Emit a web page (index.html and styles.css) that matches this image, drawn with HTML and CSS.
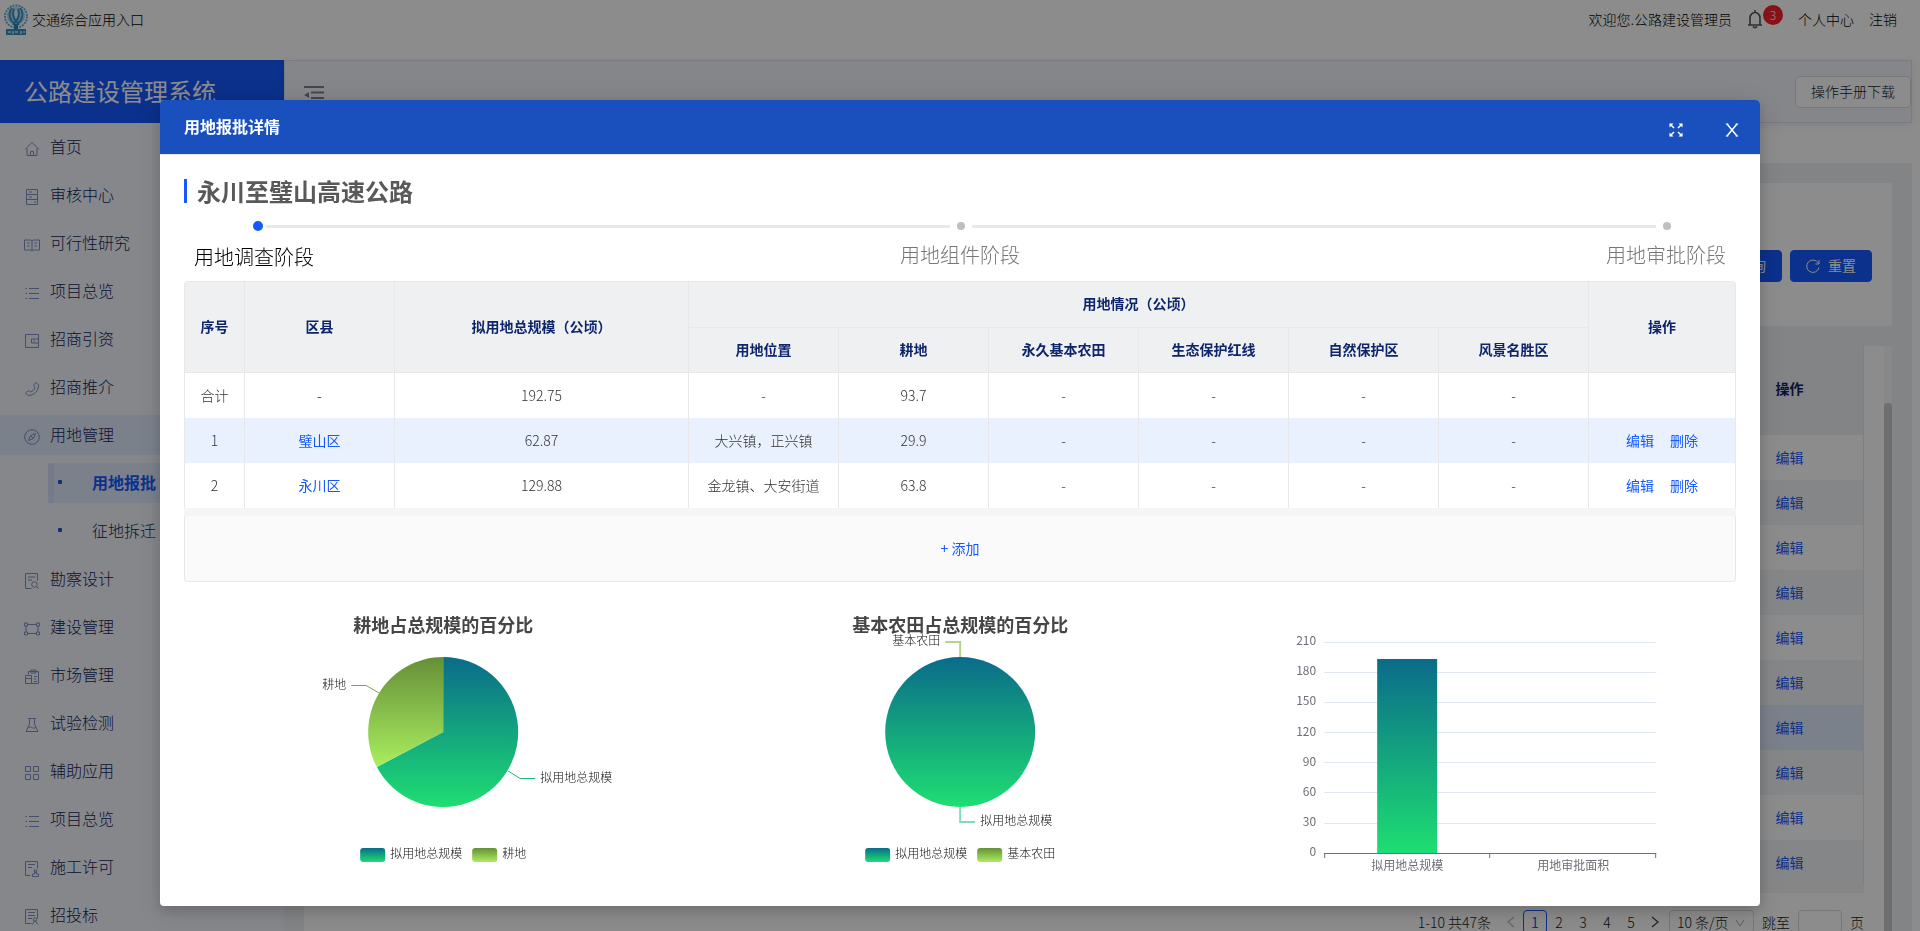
FILE: index.html
```html
<!DOCTYPE html>
<html lang="zh-CN">
<head>
<meta charset="utf-8">
<title>公路建设管理系统</title>
<link rel="stylesheet" href="styles.css">
</head>
<body>
<div class="page">
  <header class="topbar">
    <svg class="emblem" viewBox="0 0 26 32" aria-hidden="true">
      <circle cx="13" cy="12.500" r="11" fill="none" stroke="#5fb0dc" stroke-width="2" stroke-dasharray="2 1"/>
      <circle cx="13" cy="12" r="9" fill="#a8d6ec"/>
      <path d="M9 4C5 9 6 16 12 20M17 4c4 5 3 12-3 16M11 5c-3 6 1 12 5 16M15 5c3 6-1 12-5 16" fill="none" stroke="#2b8cc8" stroke-width="1.600"/>
      <path d="M13 4c-2 4-2 7 0 11 2-4 2-7 0-11" fill="#dff1fa"/>
      <path d="M11 20h4v5h-4z" fill="#2486c2"/>
      <path d="M3 25h20v6H3z" fill="#3590c6"/>
      <path d="M5 28h3M10 27v3M12 28h3M18 27v3M20 28h2" stroke="#c4e4f6" stroke-width="1.500"/>
    </svg>
    <span>交通综合应用入口</span>
    <nav class="topnav">
      <span>欢迎您.公路建设管理员</span>
      <button class="bell" type="button" aria-label="消息">
        <svg viewBox="0 0 16 20" width="16" height="20"><path d="M8 1v2M1 16h14M3 16V9a5 5.500 0 0 1 10 0v7M6 17.500c1 1.500 3 1.500 4 0" fill="none" stroke="#555" stroke-width="1.600"/></svg>
        <span class="badge">3</span>
      </button>
      <a href="#">个人中心</a>
      <a href="#">注销</a>
    </nav>
  </header>
  <div class="shell">
    <aside class="sidebar">
      <div class="brand">公路建设管理系统</div>
      <ul class="menu">
        <li><a href="#"><svg viewBox="0 0 16 16"><path d="M1 8.500 8 1.500l7 7M3 7.500v7h10v-7M6.500 14.500v-4h3v4"/></svg>首页</a></li>
        <li><a href="#"><svg viewBox="0 0 16 16"><path d="M2.500.500h11v15h-11zM2.500 5.500h11M2.500 10.500h11M5 3h3M5 8h3M10 13h2"/></svg>审核中心</a></li>
        <li><a href="#"><svg viewBox="0 0 16 16"><path d="M.500 3h6L8 4l1.500-1h6v10h-6L8 14l-1.500-1h-6zM8 4v10M3 6h2.500M3 9h2.500M10.500 6H13M10.500 9H13"/></svg>可行性研究</a></li>
        <li><a href="#"><svg viewBox="0 0 16 16"><path d="M5 3.500h10M5 8.500h10M5 13.500h10M1.500 3.500H3M1.500 8.500H3M1.500 13.500H3"/></svg>项目总览</a></li>
        <li><a href="#"><svg viewBox="0 0 16 16"><path d="M1.500 1.500h13v13h-13zM14.500 6h-7v4h7M9.500 8h1.500"/></svg>招商引资</a></li>
        <li><a href="#"><svg viewBox="0 0 16 16"><path d="M12 1.500 14.500 4C14.500 10 10 14.500 4 14.500L1.500 12l3-2.500 2 1.500C9 10 10 9 11 6.500L9.500 4.500z"/></svg>招商推介</a></li>
        <li><a href="#" class="is-open"><svg viewBox="0 0 16 16"><circle cx="8" cy="8" r="7.300"/><path d="M11.500 4.500 9.500 9.500l-5 2 2-5zM7 7l2 2"/></svg>用地管理</a>
          <ul class="submenu">
            <li><a href="#" class="is-active">用地报批</a></li>
            <li><a href="#">征地拆迁</a></li>
          </ul>
        </li>
        <li><a href="#"><svg viewBox="0 0 16 16"><path d="M7.500 15.500h-6V.500h12v7M4 4h7M4 7h4"/><circle cx="10.500" cy="11.500" r="2.800"/><path d="m12.500 13.500 2 2"/></svg>勘察设计</a></li>
        <li><a href="#"><svg viewBox="0 0 16 16"><path d="M2 5v6M14 5v6M4 3.500h8M4 12.500h8M.500 2h3v3h-3zM12.500 2h3v3h-3zM.500 11h3v3h-3zM12.500 11h3v3h-3z"/></svg>建设管理</a></li>
        <li><a href="#"><svg viewBox="0 0 16 16"><path d="M4.500 5.500v-3h10v12h-7M7 1h5v3H7zM1.500 6.500h6v8h-6zM1.500 9.500h6M10 7.500h3M10 10h2M10 12.500h3"/></svg>市场管理</a></li>
        <li><a href="#"><svg viewBox="0 0 16 16"><path d="M4 1.500h8M5.500 1.500V7L2 14.500h12L10.500 7V1.500M4 10.500c3-2 4 2 8 0"/></svg>试验检测</a></li>
        <li><a href="#"><svg viewBox="0 0 16 16"><path d="M1.500 1.500h5v5h-5zM9.500 1.500h5v5h-5zM1.500 9.500h5v5h-5zM9.500 9.500h5v5h-5z"/></svg>辅助应用</a></li>
        <li><a href="#"><svg viewBox="0 0 16 16"><path d="M5 3.500h10M5 8.500h10M5 13.500h10M1.500 3.500H3M1.500 8.500H3M1.500 13.500H3"/></svg>项目总览</a></li>
        <li><a href="#"><svg viewBox="0 0 16 16"><path d="M6.500 14.500h-5V.500h12v7M4 3.500h7M4 6.500h4M8.500 15.500h6v-2.500h-2v-2h-2v2h-2z"/><circle cx="11.500" cy="10" r="1.300"/></svg>施工许可</a></li>
        <li><a href="#"><svg viewBox="0 0 16 16"><path d="M7.500 14.500h-6V.500h12v9M4 3.500h7M4 6.500h7M4 9.500h4M8.500 15.500l2-3.500h1l2.500 3.500"/><circle cx="11" cy="10.500" r="1.700"/></svg>招投标</a></li>
      </ul>
    </aside>
    <main class="content">
      <div class="toolbar">
        <button class="fold" type="button" aria-label="收起菜单">
          <svg viewBox="0 0 20 18" width="20" height="18"><path d="M0 1h20M7 6.500h13M7 12h13M0 17h20" stroke="#7c8090" stroke-width="2"/><path d="M0 9l5-3v6z" fill="#7c8090"/></svg>
        </button>
        <button class="btn" type="button">操作手册下载</button>
      </div>
      <div class="tabs"></div>
      <div class="workspace">
        <section class="search">
          <button class="btn btn-primary" type="button">查询</button>
          <button class="btn btn-primary" type="button">
            <svg viewBox="0 0 14 14" width="14" height="14"><path d="M12.500 4.500A6.200 6.200 0 1 0 13 8.500M13 1v4H9.500" fill="none" stroke="#fff"/></svg>重置
          </button>
        </section>
        <section class="listing">
          <div class="listing-body">
            <table class="records">
              <thead><tr><th></th><th>操作</th></tr></thead>
              <tbody>
                <tr><td></td><td><a href="#">编辑</a></td></tr>
                <tr><td></td><td><a href="#">编辑</a></td></tr>
                <tr><td></td><td><a href="#">编辑</a></td></tr>
                <tr><td></td><td><a href="#">编辑</a></td></tr>
                <tr><td></td><td><a href="#">编辑</a></td></tr>
                <tr><td></td><td><a href="#">编辑</a></td></tr>
                <tr class="is-hover"><td></td><td><a href="#">编辑</a></td></tr>
                <tr><td></td><td><a href="#">编辑</a></td></tr>
                <tr><td></td><td><a href="#">编辑</a></td></tr>
                <tr><td></td><td><a href="#">编辑</a></td></tr>
              </tbody>
            </table>
            <div class="records-foot"></div>
            <nav class="pager">
              <span class="pager-total">1-10 共47条</span>
              <button type="button" aria-label="上一页"><svg viewBox="0 0 8 12" width="8" height="12"><path d="M7 1 1 6l6 5" fill="none" stroke="#bbb" stroke-width="1.300"/></svg></button>
              <button type="button" class="is-current">1</button>
              <button type="button">2</button>
              <button type="button">3</button>
              <button type="button">4</button>
              <button type="button">5</button>
              <button type="button" aria-label="下一页"><svg viewBox="0 0 8 12" width="8" height="12"><path d="m1 1 6 5-6 5" fill="none" stroke="#444" stroke-width="1.300"/></svg></button>
              <span class="pager-size">
                <select aria-label="每页条数"><option>10 条/页</option></select>
                <svg viewBox="0 0 10 8" width="10" height="8"><path d="m1 1 4 6 4-6" fill="none" stroke="#aaa"/></svg>
              </span>
              <label class="pager-jump">跳至<input type="text">页</label>
            </nav>
          </div>
          <div class="scrollbar"><div class="thumb"></div></div>
        </section>
      </div>
    </main>
  </div>
</div>

<div class="mask">
  <section class="modal" role="dialog" aria-labelledby="modal-title">
    <header class="modal-head">
      <h1 id="modal-title">用地报批详情</h1>
      <button type="button" aria-label="全屏"><svg viewBox="0 0 14 14" width="14" height="14"><path d="M1 1l4 4M13 1 9 5M1 13l4-4M13 13 9 9" stroke="#fff" stroke-width="1.500"/><path d="M.500.500h4l-4 4zM13.500.500v4l-4-4zM.500 13.500v-4l4 4zM13.500 13.500h-4l4-4z" fill="#fff"/></svg></button>
      <button type="button" aria-label="关闭"><svg viewBox="0 0 14 14" width="14" height="14"><path d="M2 1l10 12M12 1 2 13" stroke="#fff" stroke-width="1.500"/><path d="M.800 1h2.500M10.700 1h2.500M.800 13h2.500M10.700 13h2.500" stroke="#fff"/></svg></button>
    </header>
    <div class="modal-body">
      <h2 class="project">永川至璧山高速公路</h2>
      <div class="rail"><i class="dot is-on"></i><i class="line"></i><i class="dot"></i><i class="line"></i><i class="dot"></i></div>
      <ol class="stages"><li class="is-on">用地调查阶段</li><li>用地组件阶段</li><li>用地审批阶段</li></ol>
      <div class="land-wrap">
      <table class="land">
        <colgroup><col class="c-no"><col class="c-mid"><col><col class="c-mid"><col class="c-mid"><col class="c-mid"><col class="c-mid"><col class="c-mid"><col class="c-mid"><col class="c-op"></colgroup>
        <thead>
          <tr><th rowspan="2">序号</th><th rowspan="2">区县</th><th rowspan="2">拟用地总规模（公顷）</th><th colspan="6">用地情况（公顷）</th><th rowspan="2">操作</th></tr>
          <tr><th>用地位置</th><th>耕地</th><th>永久基本农田</th><th>生态保护红线</th><th>自然保护区</th><th>风景名胜区</th></tr>
        </thead>
        <tbody>
          <tr><td>合计</td><td><a href="#">-</a></td><td>192.75</td><td>-</td><td>93.7</td><td>-</td><td>-</td><td>-</td><td>-</td><td></td></tr>
          <tr class="is-hover"><td>1</td><td><a href="#">璧山区</a></td><td>62.87</td><td>大兴镇，正兴镇</td><td>29.9</td><td>-</td><td>-</td><td>-</td><td>-</td><td><div class="ops"><a href="#">编辑</a><a href="#">删除</a></div></td></tr>
          <tr><td>2</td><td><a href="#">永川区</a></td><td>129.88</td><td>金龙镇、大安街道</td><td>63.8</td><td>-</td><td>-</td><td>-</td><td>-</td><td><div class="ops"><a href="#">编辑</a><a href="#">删除</a></div></td></tr>
        </tbody>
      </table>
      </div>
      <div class="strip"></div>
      <button class="add" type="button">+ 添加</button>
      <div class="charts">
        <svg class="chart" viewBox="0 0 517 300">
          <defs>
            <linearGradient id="teal" x1="0" y1="0" x2="0" y2="1"><stop offset="0" stop-color="#0a6b8a"/><stop offset="1" stop-color="#1ede72"/></linearGradient>
            <linearGradient id="lime" x1="0" y1="0" x2="0" y2="1"><stop offset="0" stop-color="#668f38"/><stop offset="1" stop-color="#a9ee5e"/></linearGradient>
          </defs>
          <text class="chart-title" x="259" y="50">耕地占总规模的百分比</text>
          <path d="M259 150V75A75 75 0 1 1 192.700 185Z" fill="url(#teal)"/>
          <path d="M259 150 192.700 185A75 75 0 0 1 259 75Z" fill="url(#lime)"/>
          <path d="M167 103.500h15l13 7.500" fill="none" stroke="#7ea649"/>
          <path d="M324 189l12 7.500h15" fill="none" stroke="#1bbd79"/>
          <text class="end" x="162" y="107">耕地</text>
          <text x="356" y="200">拟用地总规模</text>
          <rect x="176" y="266" width="25" height="14" rx="3" fill="url(#teal)"/><text x="206" y="276">拟用地总规模</text>
          <rect x="288" y="266" width="25" height="14" rx="3" fill="url(#lime)"/><text x="318" y="276">耕地</text>
        </svg>
        <svg class="chart" viewBox="0 0 517 300">
          <text class="chart-title" x="259" y="50">基本农田占总规模的百分比</text>
          <circle cx="259" cy="150" r="75" fill="url(#teal)"/>
          <path d="M244 60h15v15" fill="none" stroke="#b6d58c" stroke-width="2"/>
          <path d="M259 225v15h15" fill="none" stroke="#86d9ba" stroke-width="2"/>
          <text class="end" x="239" y="63">基本农田</text>
          <text x="279" y="243">拟用地总规模</text>
          <rect x="164" y="266" width="25" height="14" rx="3" fill="url(#teal)"/><text x="194" y="276">拟用地总规模</text>
          <rect x="276" y="266" width="25" height="14" rx="3" fill="url(#lime)"/><text x="306" y="276">基本农田</text>
        </svg>
        <svg class="chart axis" viewBox="0 0 517 300">
          <path d="M105 60.500h332M105 90.500h332M105 120.500h332M105 150.500h332M105 180.500h332M105 210.500h332M105 241.500h332" stroke="#e0e6f1"/>
          <rect x="158" y="77" width="60" height="194" fill="url(#teal)"/>
          <path d="M105 271.500h332M105.500 271v5M270.500 271v5M436.500 271v5" stroke="#6e7079"/>
          <text class="end" x="97" y="63">210</text><text class="end" x="97" y="93">180</text><text class="end" x="97" y="123">150</text><text class="end" x="97" y="154">120</text><text class="end" x="97" y="184">90</text><text class="end" x="97" y="214">60</text><text class="end" x="97" y="244">30</text><text class="end" x="97" y="274">0</text>
          <text class="mid" x="188" y="288">拟用地总规模</text><text class="mid" x="354" y="288">用地审批面积</text>
        </svg>
      </div>
    </div>
  </section>
</div>
</body>
</html>
```
FILE: styles.css
```css
* { box-sizing: border-box; }
html, body { height: 100%; }
body {
  margin: 0;
  overflow: hidden;
  font: 300 14px/22px "Noto Sans CJK SC", sans-serif;
  color: #111;
  background: #fff;
}
a { color: #1459ff; text-decoration: none; }
ul, ol { list-style: none; margin: 0; padding: 0; }
button, input, select { font: inherit; color: inherit; }
button { cursor: pointer; }
h1, h2 { margin: 0; }

.page { height: 100vh; display: flex; flex-direction: column; overflow: hidden; }
.topbar { flex: none; height: 60px; padding: 4px 23px 0 3px; display: flex; align-items: flex-start; gap: 3px; line-height: 30px; color: #000; }
.emblem { width: 26px; height: 32px; }
.topnav { margin-left: auto; display: flex; gap: 15px; }
.topnav a { color: #000; }
.bell { display: flex; align-items: flex-start; border: 0; background: none; padding: 5px 0 0; height: 32px; }
.badge { width: 20px; height: 20px; margin-top: -4px; border-radius: 10px; background: #f5222d; color: #fff; font-size: 12px; line-height: 20px; text-align: center; }

.shell { flex: 1; min-height: 0; display: flex; padding-right: 8px; }
.sidebar { flex: none; width: 284px; background: #f3f6fc; }
.brand { height: 63px; padding-left: 24px; background: #1459ff; color: #fff; font-size: 24px; font-weight: 400; line-height: 62px; }
.menu { padding-top: 4px; font-size: 16px; }
.menu a { display: flex; align-items: center; gap: 10px; height: 40px; margin-bottom: 8px; padding: 0 0 2px 24px; color: #14265c; line-height: 38px; }
.menu svg { width: 16px; height: 16px; margin-top: 6px; fill: none; stroke: #7f90c4; }
.menu .is-open { background: #deebfd; }
.submenu a { margin-left: 48px; padding-left: 10px; gap: 30px; }
.submenu a::before { content: ""; width: 4px; height: 4px; border-radius: 1px; background: #1f56d8; }
.submenu .is-active { border-left: 6px solid #d3e0fb; padding-left: 4px; background: #deebfd; color: #1459ff; font-weight: bold; }

.content { flex: 1; min-width: 0; display: flex; flex-direction: column; }
.toolbar { flex: none; height: 63px; padding: 0 0 0 19px; display: flex; align-items: center; justify-content: space-between; background: #f3f4fc; border: 1px solid #dcdeee; box-shadow: 0 2px 8px rgba(0, 0, 0, .08); }
.fold { border: 0; background: none; padding: 7px 0 0; display: flex; }
.btn { height: 32px; padding: 0 15px 2px; border: 1px solid #d9d9d9; border-radius: 4px; background: #fff; display: flex; align-items: center; gap: 8px; line-height: 28px; color: #222; }
.btn svg { margin-top: 2px; }
.btn-primary { background: #1459ff; border-color: #1459ff; color: #fff; font-weight: 400; }
.tabs { flex: none; height: 40px; }
.workspace { flex: 1; min-height: 0; padding: 20px 20px 0; display: flex; flex-direction: column; gap: 20px; background: #eef0f2; }
.search { flex: none; height: 143px; padding: 22px 20px 0; display: flex; align-items: center; justify-content: flex-end; gap: 8px; background: #fff; border-radius: 2px; }
.listing { flex: 1; min-height: 0; display: flex; background: #fff; }
.listing-body { flex: 1; padding: 0 20px; overflow: hidden; }
.scrollbar { width: 8px; padding-top: 57px; display: flex; background: #f7f7f7; }
.thumb { flex: 1; border-radius: 3px 3px 0 0; background: #c8c8c8; }
.records { width: 100%; border-collapse: collapse; border-right: 1px solid #e8e8e8; table-layout: fixed; }
.records th, .records td { height: 45px; padding: 0 0 2px; text-align: left; }
.records th { height: 89px; padding-bottom: 6px; background: #eef0f2; color: #0d256b; }
.records th:last-child { width: 88px; }
.records tr:nth-child(even) td { background: #f3f5f8; }
.records .is-hover td { background: #deebfd; }
.records a, .land a { font-weight: 400; }
.records-foot { height: 8px; background: #f5f5f5; }
.pager { display: flex; justify-content: flex-end; align-items: center; margin-top: 17px; height: 24px; color: #222; }
.pager-total { margin-right: 8px; }
.pager button { width: 24px; height: 24px; padding: 0; border: 1px solid transparent; background: none; line-height: 20px; }
.pager .is-current { border-color: #1459ff; border-radius: 4px; background: #fff; color: #1459ff; font-weight: 400; }
.pager-size { position: relative; display: flex; margin: 0 8px 0 2px; }
.pager-size select { appearance: none; width: 85px; height: 24px; padding: 0 7px; border: 1px solid #d9d9d9; border-radius: 4px; background: #fff; line-height: 20px; }
.pager-size svg { position: absolute; right: 9px; top: 9px; }
.pager-jump { display: flex; align-items: center; gap: 8px; }
.pager-jump input { width: 44px; height: 24px; border: 1px solid #d9d9d9; border-radius: 4px; }

.mask { position: fixed; inset: 0; padding: 100px 160px 0; overflow: hidden; background: rgba(0, 0, 0, .45); }
.modal { background: #fff; border-radius: 4px; overflow: hidden; box-shadow: 0 4px 12px rgba(0, 0, 0, .15), 0 6px 28px 4px rgba(0, 0, 0, .1); }
.modal-head { display: flex; align-items: center; gap: 42px; height: 55px; padding: 0 21px 0 24px; background: #1950be; border-bottom: 1px solid #e8e8e8; color: #fff; }
.modal-head h1 { flex: 1; padding-bottom: 2px; font-size: 16px; line-height: 24px; }
.modal-head button { display: flex; padding: 5px 0 0; border: 0; background: none; }
.modal-body { padding: 24px; }
.project { display: flex; align-items: center; gap: 10px; height: 24px; color: #595959; font-size: 24px; line-height: 24px; }
.project::before { content: ""; width: 3px; height: 24px; background: #1459ff; }
.rail { display: flex; align-items: center; height: 10px; margin-top: 18px; padding: 0 65px 0 69px; }
.dot { width: 8px; height: 8px; border-radius: 50%; background: #bfbfbf; }
.dot.is-on { width: 10px; height: 10px; margin-right: -4px; background: #1459ff; }
.line { flex: 1; height: 3px; margin: 0 7px; background: #e8e8e8; }
.stages { display: flex; justify-content: space-between; margin-top: 8px; height: 42px; font-size: 20px; line-height: 32px; color: #777; }
.stages li { width: 140px; text-align: center; }
.stages .is-on { color: #000; line-height: 36px; }

.land-wrap { border: 1px solid #e8e8e8; border-bottom: 0; border-radius: 4px 4px 0 0; overflow: hidden; }
.land { width: 100%; border-collapse: separate; border-spacing: 0; table-layout: fixed; color: #333; text-align: center; }
.c-no { width: 60px; }
.c-mid { width: 150px; }
.c-op { width: 146px; }
.land th, .land td { height: 45px; padding: 0 0 2px; border-right: 1px solid #e8e8e8; }
.land th { background: #eef0f2; color: #0d256b; border-bottom: 1px solid #e8e8e8; }
.land thead tr:first-child th { height: 46px; padding-bottom: 3px; }
.land tr > :last-child { border-right: 0; }
.land thead tr:last-child > :last-child { border-right: 1px solid #e8e8e8; }
.land .is-hover td { background: #e9f1ff; }
.ops { display: flex; justify-content: center; gap: 16px; }
.strip { height: 8px; background: #f5f5f5; }
.add { display: block; width: 100%; height: 66px; padding: 0 0 2px; border: 1px solid #e8e8e8; border-top: 0; border-radius: 0 0 4px 4px; background: #fafafa; color: #1459ff; font-weight: 400; }

.charts { display: grid; grid-template-columns: repeat(3, 1fr); }
.chart { width: 100%; height: 300px; font-size: 12px; fill: #111; }
.axis { font-weight: 400; fill: #6e7079; }
.chart-title { font-size: 18px; font-weight: bold; fill: #464646; text-anchor: middle; }
.end { text-anchor: end; }
.mid { text-anchor: middle; }
```
